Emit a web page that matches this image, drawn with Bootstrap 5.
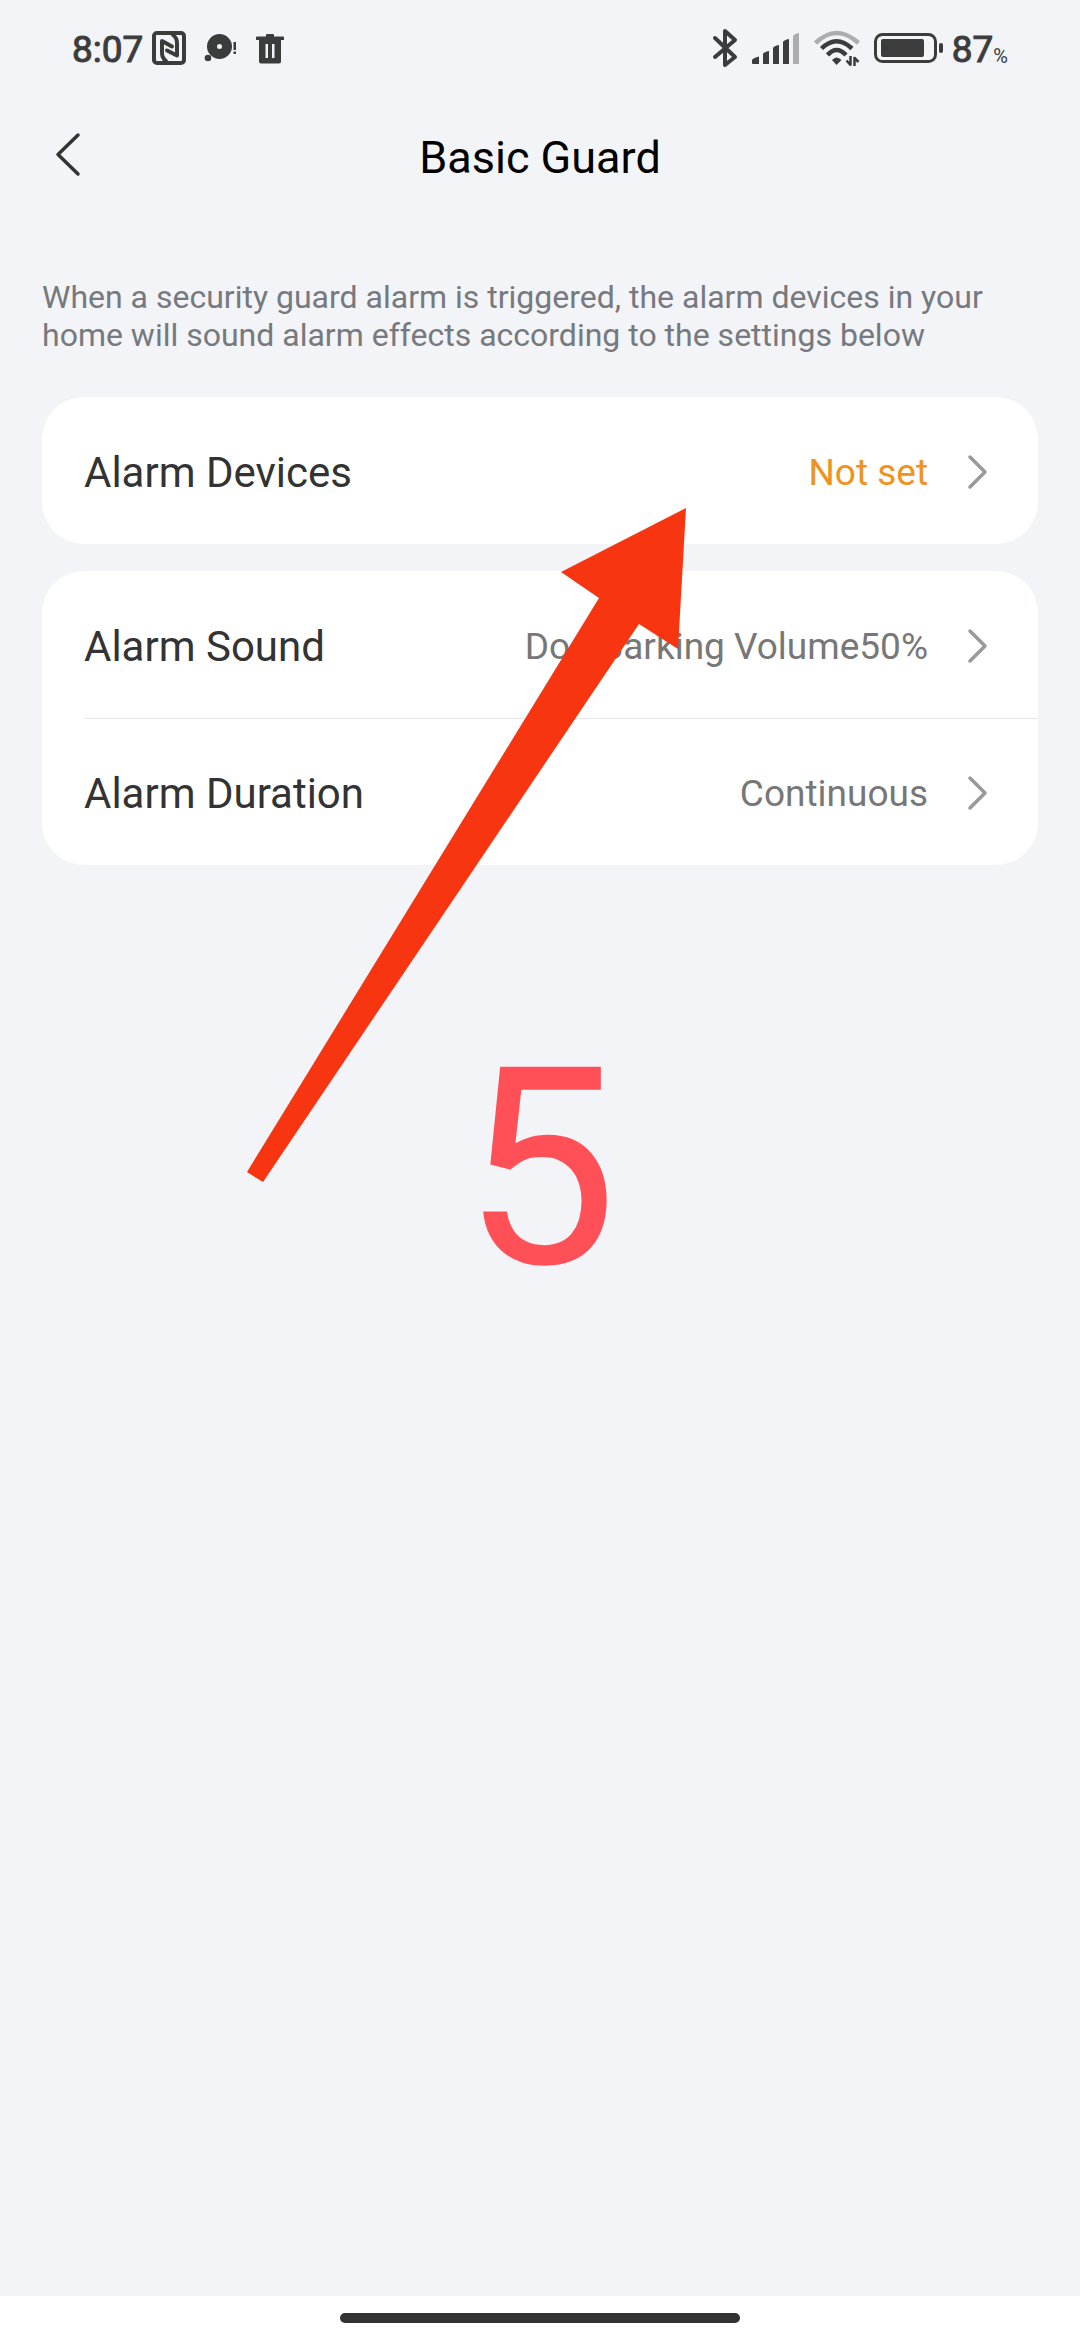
<!DOCTYPE html>
<html lang="en">
<head>
<meta charset="utf-8">
<meta name="viewport" content="width=device-width, initial-scale=1">
<title>Basic Guard</title>
<link href="https://cdn.jsdelivr.net/npm/bootstrap@5.3.0/dist/css/bootstrap.min.css" rel="stylesheet">
<style>
  body { font-family: Roboto, "Noto Sans", sans-serif; background: #f2f4f8; color: #333; }
  svg { display: block; flex: none; }
  .status { height: 96px; padding: 0 72px; font-size: 37px; line-height: 40px; color: #3c3c3c; }
  .status-group { height: 40px; }
  .status-text { padding-top: 4px; -webkit-text-stroke: 1px #3c3c3c; }
  .icons-left { gap: 16px; }
  .icons-right { gap: 14px; }
  .percent { font-size: 20px; line-height: 20px; padding-top: 16px; }
  .topbar { height: 120px; padding: 0 42px; }
  .side-slot { width: 60px; height: 60px; }
  .screen-title { font-size: 45px; line-height: 60px; font-weight: 400; color: #000; padding-top: 4px; }
  .content { padding: 0 42px; }
  .intro { font-size: 32px; line-height: 38px; color: #77797e; margin: 62px 0 43px; }
  .settings { --bs-list-group-border-width: 0; --bs-list-group-border-radius: 42px; margin-bottom: 27px; }
  .setting { height: 147px; padding: 2px 49px 0 42px; color: #333; font-size: 42px; line-height: 48px; position: relative; }
  .setting + .setting::before { content: ""; position: absolute; top: 0; left: 42px; right: 0; height: 1px; background: #e8e8e8; }
  .setting-name, .setting-value { padding-top: 3px; }
  .setting-value { font-size: 37px; line-height: 48px; color: #777; margin-right: 37px; }
  .setting-value.unset { color: #ef9220; }
  .step { font-size: 276px; line-height: 320px; color: #ff5058; margin-top: 144px; }
  .pointer { left: 247px; top: 508px; pointer-events: none; z-index: 3; }
  .gesture { height: 44px; }
  .gesture-bar { width: 37%; height: 10px; background: #333; }
</style>
</head>
<body>
<div class="min-vh-100 d-flex flex-column position-relative">
  <div class="status d-flex justify-content-between align-items-center">
    <div class="status-group d-flex align-items-center">
      <span class="status-text me-2">8:07</span>
      <div class="icons-left d-flex align-items-center">
        <svg width="36" height="36" viewBox="0 0 36 36" fill="none" stroke="#3c3c3c" role="img" aria-label="NFC">
          <rect x="3" y="3" width="30" height="30" rx="3" stroke-width="4"/>
          <path d="M15 31Q11 28 11 23V11L21 16.500M22 5Q26 8 26 13V25.500L16 20.500" stroke-width="4" stroke-linejoin="round" stroke-linecap="round"/>
        </svg>
        <svg width="36" height="36" viewBox="0 0 36 36" fill="#3c3c3c" role="img" aria-label="Camera notice">
          <path fill-rule="evenodd" d="M16.500 4a12 12 0 1 0 0 25a12 12 0 1 0 0-25zM16.500 14a2.500 2.500 0 1 1 0 5a2.500 2.500 0 1 1 0-5z"/>
          <circle cx="5" cy="28" r="3.300"/>
          <path d="M30.500 12h2.500v8h-2.500zM30.500 21.500h2.500v2.500h-2.500z"/>
        </svg>
        <svg width="30" height="36" viewBox="0 0 30 36" fill="#3c3c3c" role="img" aria-label="Trash">
          <path fill-rule="evenodd" d="M2 6.500h9V5q0-1 1-1h6q1 0 1 1v1.500h9q1 0 1 1V10H26V31.500q0 2-2 2H6q-2 0-2-2V10H1V7.500q0-1 1-1zM10.500 14v14h2.500V14zM17 14v14h2.500V14z"/>
        </svg>
      </div>
    </div>
    <div class="status-group d-flex align-items-center">
      <div class="icons-right d-flex align-items-center">
        <svg width="26" height="40" viewBox="0 0 26 40" fill="none" stroke="#3c3c3c" stroke-width="4" stroke-linejoin="round" stroke-linecap="round" role="img" aria-label="Bluetooth">
          <path d="M3 10L23 29L13 37V3L23 12L3 29"/>
        </svg>
        <svg width="48" height="34" viewBox="0 0 48 34" fill="#3c3c3c" role="img" aria-label="Signal">
          <path d="M0 29Q1 27 7 25.500V33H1Q0 33 0 32zM11 23Q12 21 17 20V33H11zM21 17Q22 15 27 14V33H21zM31 11Q32 9 37 8V33H31z"/>
          <path fill="#adadaf" d="M41 5Q42 3 47 2V33H41z"/>
        </svg>
        <svg width="46" height="36" viewBox="0 0 46 36" fill="none" stroke="#3c3c3c" stroke-width="4.500" role="img" aria-label="Wi-Fi">
          <path stroke="#adadaf" d="M1.500 13Q22.500-7 44.500 13"/>
          <path d="M7.500 18.500Q22.500 4 38 18.500M13.500 25Q22.500 15 32 25"/>
          <path fill="#3c3c3c" stroke="none" d="M18 30Q22.500 25 27.500 30L22.500 35z"/>
          <path stroke-width="2.500" d="M36.500 26V35.500M32.500 30.500L37 35.500M40.500 36V27M40 27.500L44.500 32"/>
        </svg>
        <svg width="70" height="32" viewBox="0 0 70 32" fill="none" stroke="#3c3c3c" stroke-width="3" role="img" aria-label="Battery">
          <rect x="1.500" y="2.500" width="60" height="27" rx="7"/>
          <rect x="7" y="7" width="43" height="18" rx="2" fill="#3c3c3c" stroke="none"/>
          <rect x="65" y="11" width="4" height="10" rx="2" fill="#3c3c3c" stroke="none"/>
        </svg>
      </div>
      <span class="status-text ps-2">87</span><span class="percent">%</span>
    </div>
  </div>

  <header class="topbar d-flex justify-content-between align-items-center">
    <button type="button" class="side-slot btn p-0 border-0" aria-label="Back">
      <svg width="60" height="60" viewBox="0 0 60 60" fill="none" stroke="#333" stroke-width="3.500" stroke-linecap="round" stroke-linejoin="round"><path d="M36 9L16 28.500L36 48"/></svg>
    </button>
    <h1 class="screen-title m-0">Basic Guard</h1>
    <span class="side-slot"></span>
  </header>

  <main class="content flex-grow-1">
    <p class="intro">When a security guard alarm is triggered, the alarm devices in your home will sound alarm effects according to the settings below</p>
    <div class="settings list-group">
      <a href="#devices" class="setting list-group-item d-flex align-items-center">
        <span class="setting-name me-auto">Alarm Devices</span><span class="setting-value unset">Not set</span>
        <svg width="24" height="38" viewBox="0 0 24 38" fill="none" stroke="#999" stroke-width="3.500" stroke-linecap="round" stroke-linejoin="round"><path d="M5 4L20 19L5 34"/></svg>
      </a>
    </div>
    <div class="settings list-group">
      <a href="#sound" class="setting list-group-item d-flex align-items-center">
        <span class="setting-name me-auto">Alarm Sound</span><span class="setting-value">Dog Barking Volume50%</span>
        <svg width="24" height="38" viewBox="0 0 24 38" fill="none" stroke="#999" stroke-width="3.500" stroke-linecap="round" stroke-linejoin="round"><path d="M5 4L20 19L5 34"/></svg>
      </a>
      <a href="#duration" class="setting list-group-item d-flex align-items-center">
        <span class="setting-name me-auto">Alarm Duration</span><span class="setting-value">Continuous</span>
        <svg width="24" height="38" viewBox="0 0 24 38" fill="none" stroke="#999" stroke-width="3.500" stroke-linecap="round" stroke-linejoin="round"><path d="M5 4L20 19L5 34"/></svg>
      </a>
    </div>
    <div class="step text-center">5</div>
  </main>

  <svg class="pointer position-absolute" width="440" height="675" viewBox="0 0 440 675" aria-hidden="true">
    <path fill="#f73510" d="M439 0L431 141L392 116L16 674L0 664L352 90L314 64z"/>
  </svg>

  <footer class="gesture bg-white d-flex justify-content-center align-items-center">
    <div class="gesture-bar rounded-pill"></div>
  </footer>
</div>
<script src="https://cdn.jsdelivr.net/npm/bootstrap@5.3.0/dist/js/bootstrap.bundle.min.js"></script>
</body>
</html>
